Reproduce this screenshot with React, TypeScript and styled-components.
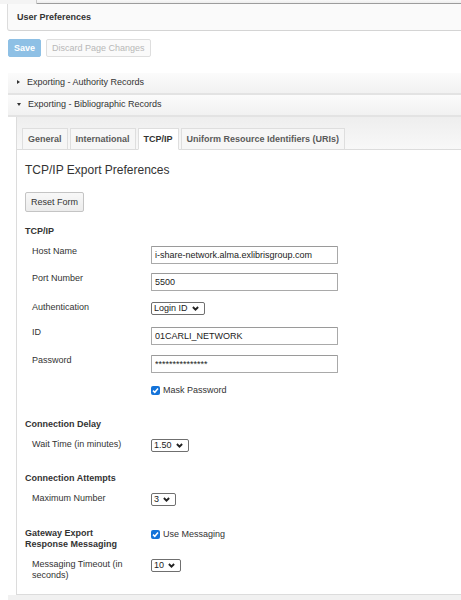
import React from "react";
import styled, { createGlobalStyle } from "styled-components";

const Global = createGlobalStyle`
  html, body { margin: 0; padding: 0; background: #fff; }
  body {
    font-family: "Liberation Sans", Arial, sans-serif;
    font-size: 9px;
    line-height: 11px;
    color: #333;
    overflow: hidden;
  }
  * { box-sizing: border-box; }
`;

const Page = styled.div`
  width: 461px;
  height: 600px;
  display: flex;
  flex-direction: column;
`;

const TopStrip = styled.div`
  display: flex;
  height: 4px;
`;

const TopLeft = styled.div`
  width: 37px;
  border-right: 1px solid #c8c8c8;
  background: #f4f4f4;
`;

const TopRight = styled.div`
  flex: 1;
  background: linear-gradient(#f8f8f8, #ededed);
  border-bottom: 1px solid #9c9c9c;
`;

const Header = styled.div`
  margin-left: 7px;
  height: 27px;
  display: flex;
  align-items: center;
  padding-left: 9px;
  background: #fafafa;
  border-left: 1px solid #dcdcdc;
  border-bottom: 1px solid #d4d4d4;
  border-bottom-left-radius: 3px;
  font-weight: bold;
  color: #333;
`;

const Toolbar = styled.div`
  display: flex;
  gap: 5px;
  margin: 8px 0 0 8px;
`;

const Button = styled.button<{ $variant?: "primary" | "disabled" | "default" }>`
  height: ${(p) => (p.$variant === "default" ? "20px" : "18px")};
  padding: 0 5px;
  font-family: inherit;
  font-size: 9px;
  border-radius: 2px;
  cursor: default;
  ${(p) =>
    p.$variant === "primary"
      ? `background: #8ec0e5; border: 1px solid #8ec0e5; color: #fff; font-weight: bold;`
      : p.$variant === "disabled"
      ? `background: #fafafa; border: 1px solid #dedede; color: #b8b8b8;`
      : `background: linear-gradient(#f8f8f8, #ececec); border: 1px solid #c4c4c4; color: #333;`}
`;

const Accordion = styled.div`
  margin: 16px 0 0 8px;
  display: flex;
  flex-direction: column;
  flex: 1;
`;

const AccordionHeader = styled.div`
  height: 22px;
  display: flex;
  align-items: center;
  gap: 7px;
  padding: 0 0 2px 9px;
  background: linear-gradient(#fbfbfb, #f1f1f1);
  border-bottom: 2px solid #e3e3e3;
  color: #333;
`;

const Caret = styled.span<{ $open?: boolean }>`
  width: 0;
  height: 0;
  ${(p) =>
    p.$open
      ? `border-left: 2.5px solid transparent; border-right: 2.5px solid transparent; border-top: 3px solid #333;`
      : `border-top: 2.5px solid transparent; border-bottom: 2.5px solid transparent; border-left: 3px solid #333;`}
`;

const AccordionBody = styled.div`
  margin-left: 8px;
  border-left: 1px solid #dcdcdc;
  border-bottom: 1px solid #dcdcdc;
  display: flex;
  flex-direction: column;
`;

const TabStrip = styled.div`
  height: 33px;
  display: flex;
  align-items: flex-end;
  gap: 2px;
  padding-left: 5px;
  background: linear-gradient(#eeeeee, #f8f8f8);
  border-bottom: 1px solid #dcdcdc;
`;

const Tab = styled.div<{ $active?: boolean }>`
  height: 22px;
  margin-bottom: -1px;
  display: flex;
  align-items: center;
  padding: 0 5px;
  font-weight: bold;
  color: ${(p) => (p.$active ? "#333" : "#5a5a5a")};
  background: ${(p) => (p.$active ? "#fff" : "#f6f6f6")};
  border: 1px solid #dedede;
  border-bottom: ${(p) => (p.$active ? "1px solid #fff" : "1px solid #dcdcdc")};
`;

const Panel = styled.div`
  padding: 13px 0 13px 8px;
  display: flex;
  flex-direction: column;
  align-items: flex-start;
  background: #fff;
`;

const Title = styled.h2`
  margin: 0;
  font-size: 12px;
  line-height: 14px;
  font-weight: normal;
  color: #333;
`;

const ResetRow = styled.div`
  margin-top: 15px;
`;

const Form = styled.div`
  margin-top: 14px;
  display: flex;
  flex-direction: column;
  align-self: stretch;
`;

const Section = styled.div<{ $mt?: number }>`
  display: grid;
  grid-template-columns: 105px 1fr;
  column-gap: 21px;
  align-items: start;
  justify-items: start;
  margin-top: ${(p) => p.$mt ?? 0}px;
  font-weight: bold;
  color: #333;
`;

const SectionValue = styled.div`
  font-weight: normal;
  padding-top: 1px;
`;

const Row = styled.div<{ $mt?: number }>`
  display: grid;
  grid-template-columns: 100px 1fr;
  column-gap: 19px;
  align-items: start;
  justify-items: start;
  padding-left: 7px;
  margin-top: ${(p) => p.$mt ?? 0}px;
  color: #333;
`;

const Label = styled.div`
  padding-top: 0;
`;

const TextInput = styled.input`
  width: 187px;
  height: 18px;
  padding: 0 3px;
  border: 1px solid #a9a9a9;
  border-top-color: #9a9a9a;
  border-radius: 1px;
  font-family: inherit;
  font-size: 9px;
  color: #222;
  background: #fff;
  outline: none;
`;

const SelectBox = styled.span`
  display: inline-flex;
  align-items: center;
  gap: 4px;
  height: 13px;
  padding: 0 5px 0 2px;
  border: 1px solid #6f6f6f;
  border-radius: 2px;
  background: #fff;
  color: #222;
  font-size: 9px;
`;

const Check = styled.label`
  display: inline-flex;
  align-items: center;
  gap: 3px;
  color: #333;
`;

const Box = styled.span`
  width: 9px;
  height: 9px;
  border-radius: 2px;
  background: #1473d9;
  display: inline-flex;
  align-items: center;
  justify-content: center;
`;

const Footer = styled.div`
  flex: 1;
  background: #f1f1f1;
`;

const Chevron = () => (
  <svg width="7" height="5" viewBox="0 0 7 5">
    <path d="M0.9 1 L3.5 3.6 L6.1 1" fill="none" stroke="#222" strokeWidth="1.9" />
  </svg>
);

const Select = ({ value }: { value: string }) => (
  <SelectBox>
    {value}
    <Chevron />
  </SelectBox>
);

const Checkbox = ({ label }: { label: string }) => (
  <Check>
    <Box>
      <svg width="7" height="7" viewBox="0 0 7 7">
        <path d="M1 3.6 L2.8 5.3 L6 1.6" fill="none" stroke="#fff" strokeWidth="1.5" />
      </svg>
    </Box>
    {label}
  </Check>
);

export default function App() {
  return (
    <>
      <Global />
      <Page>
        <TopStrip>
          <TopLeft />
          <TopRight />
        </TopStrip>
        <Header>User Preferences</Header>
        <Toolbar>
          <Button $variant="primary">Save</Button>
          <Button $variant="disabled">Discard Page Changes</Button>
        </Toolbar>
        <Accordion>
          <AccordionHeader>
            <Caret />
            Exporting - Authority Records
          </AccordionHeader>
          <AccordionHeader>
            <Caret $open />
            Exporting - Bibliographic Records
          </AccordionHeader>
          <AccordionBody>
            <TabStrip>
              <Tab>General</Tab>
              <Tab>International</Tab>
              <Tab $active>TCP/IP</Tab>
              <Tab>Uniform Resource Identifiers (URIs)</Tab>
            </TabStrip>
            <Panel>
              <Title>TCP/IP Export Preferences</Title>
              <ResetRow>
                <Button $variant="default">Reset Form</Button>
              </ResetRow>
              <Form>
                <Section>TCP/IP</Section>
                <Row $mt={9}>
                  <Label>Host Name</Label>
                  <TextInput readOnly value="i-share-network.alma.exlibrisgroup.com" />
                </Row>
                <Row $mt={9}>
                  <Label>Port Number</Label>
                  <TextInput readOnly value="5500" />
                </Row>
                <Row $mt={11}>
                  <Label>Authentication</Label>
                  <Select value="Login ID" />
                </Row>
                <Row $mt={12}>
                  <Label>ID</Label>
                  <TextInput readOnly value="01CARLI_NETWORK" />
                </Row>
                <Row $mt={10}>
                  <Label>Password</Label>
                  <TextInput readOnly value="***************" />
                </Row>
                <Row $mt={12}>
                  <span />
                  <Checkbox label="Mask Password" />
                </Row>
                <Section $mt={23}>Connection Delay</Section>
                <Row $mt={9}>
                  <Label>Wait Time (in minutes)</Label>
                  <Select value="1.50" />
                </Row>
                <Section $mt={21}>Connection Attempts</Section>
                <Row $mt={9}>
                  <Label>Maximum Number</Label>
                  <Select value="3" />
                </Row>
                <Section $mt={22}>
                  <span>
                    Gateway Export
                    <br />
                    Response Messaging
                  </span>
                  <SectionValue>
                    <Checkbox label="Use Messaging" />
                  </SectionValue>
                </Section>
                <Row $mt={9}>
                  <Label>Messaging Timeout (in seconds)</Label>
                  <Select value="10" />
                </Row>
              </Form>
            </Panel>
          </AccordionBody>
          <Footer />
        </Accordion>
      </Page>
    </>
  );
}
